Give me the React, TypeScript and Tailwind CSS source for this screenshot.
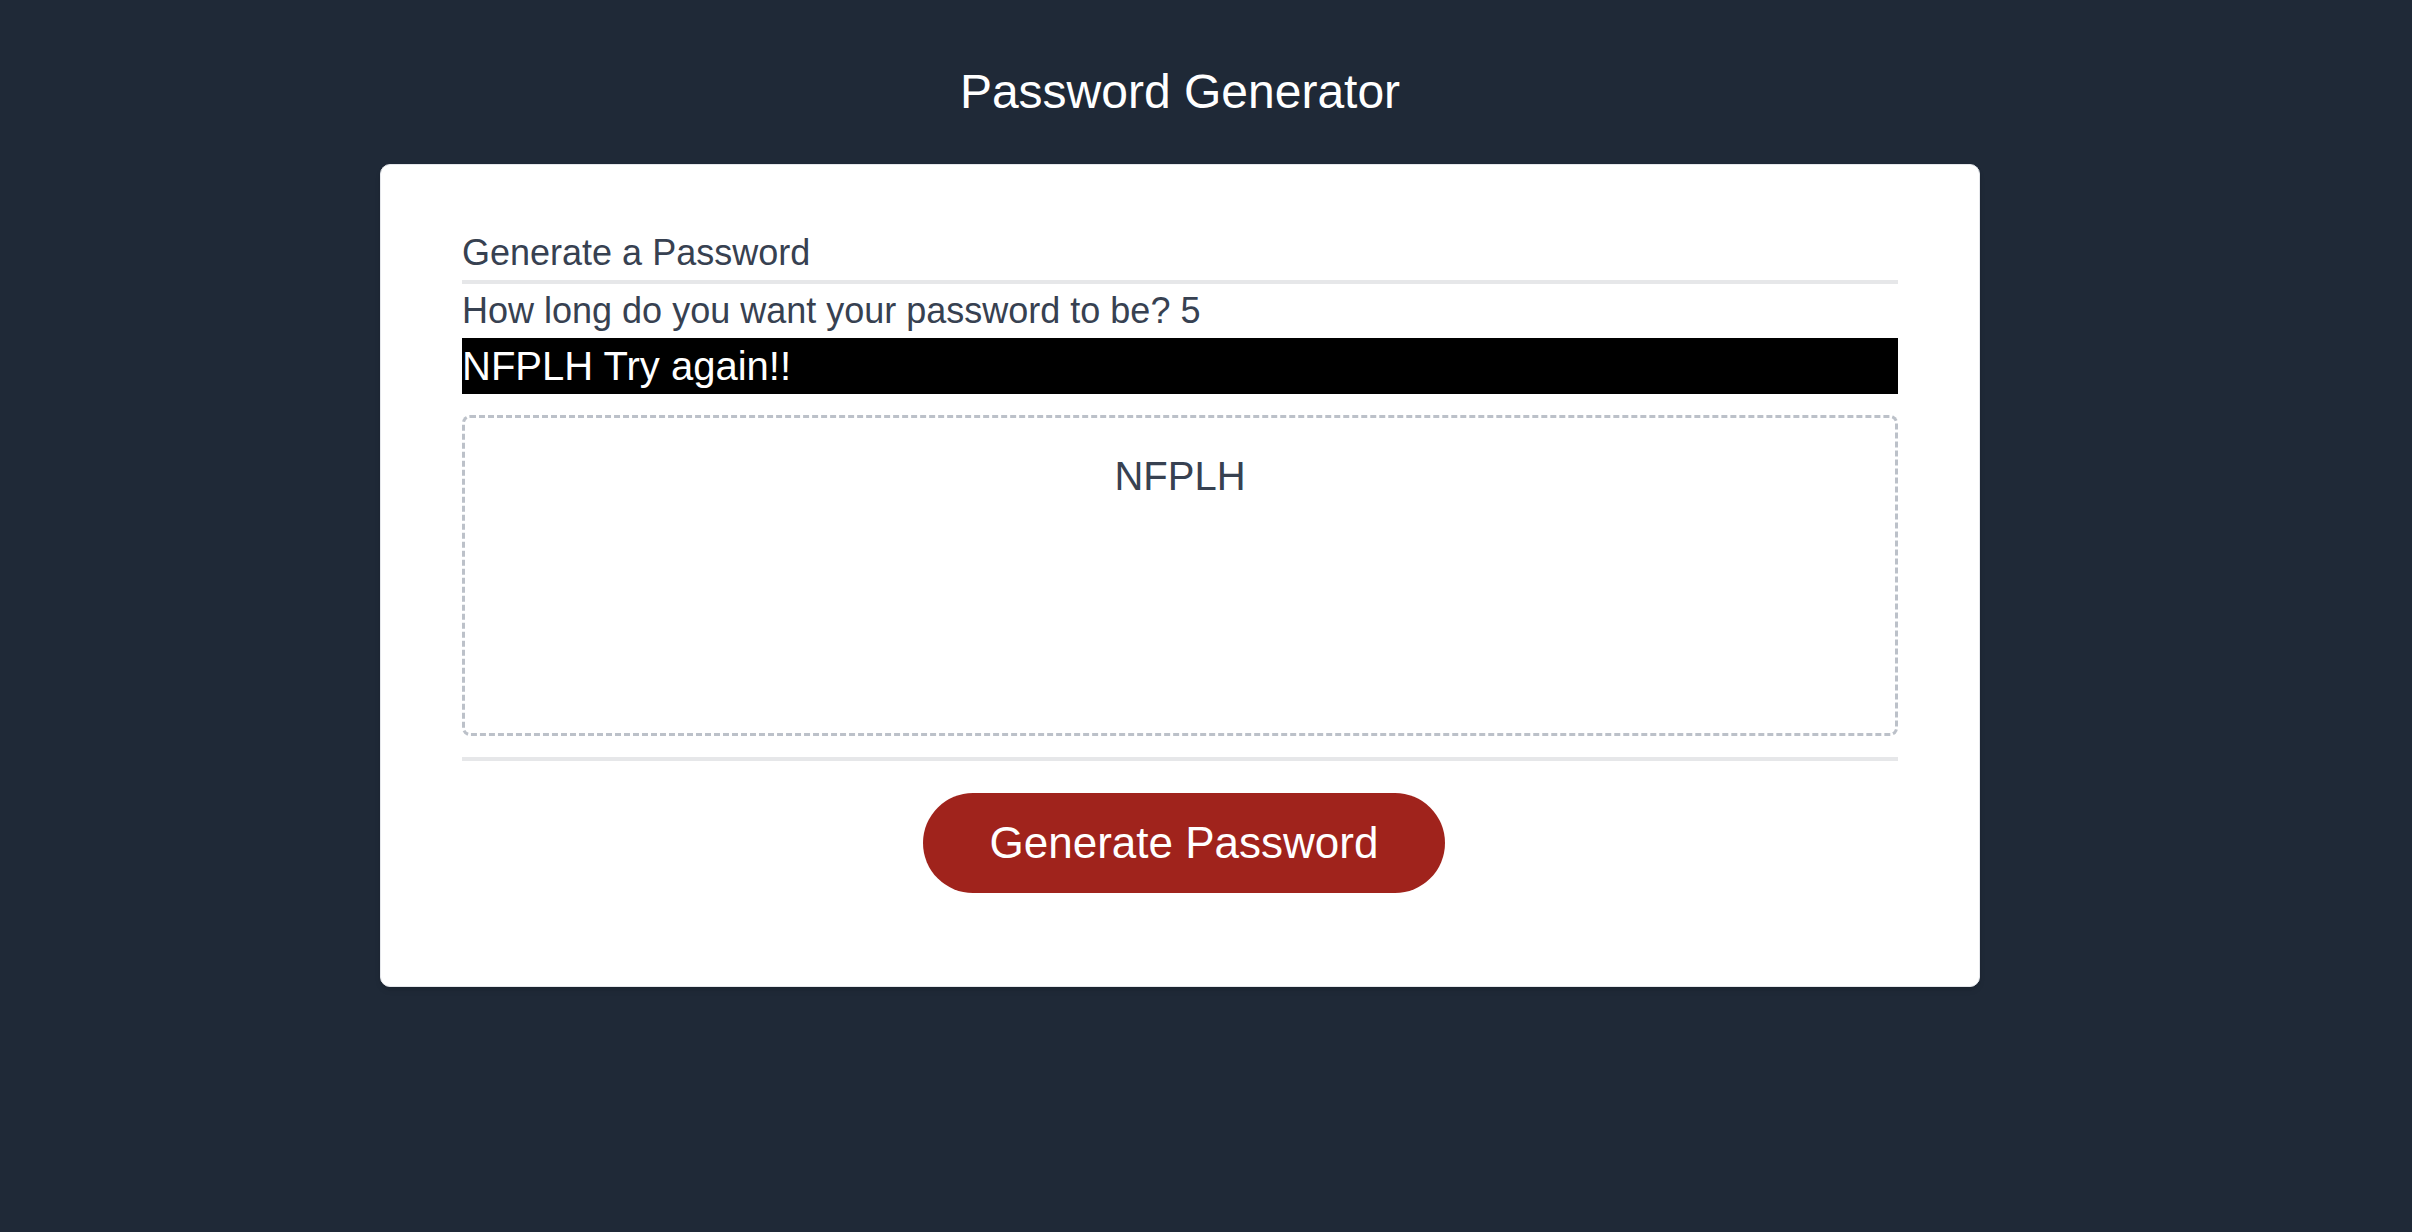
const App = () => {
  return (
    <div
      className="min-h-[1232px] w-full bg-[#1f2937] pr-[52px] pt-[56px]"
      style={{ fontFamily: '"Liberation Sans", Arial, Helvetica, sans-serif' }}
    >
      <h1 className="text-center text-[48px] leading-[72px] font-normal text-white">Password Generator</h1>

      <div className="mx-auto mt-[36px] w-[1600px] rounded-[10px] border border-[#e5e7eb] bg-white px-[81px] pt-[61px] pb-[93px] shadow-md">
        <h2 className="border-b-4 border-[#e6e7e9] text-[36px] leading-[54px] text-[#374151]">Generate a Password</h2>
        <p className="text-[36px] leading-[54px] text-[#374151]">How long do you want your password to be? 5</p>
        <p className="bg-black text-[40px] leading-[56px] text-white">NFPLH Try again!!</p>

        <div className="mt-[21px] h-[321px] rounded-[8px] border-[3px] border-dashed border-[#bcc1c9] pt-[30px] text-center text-[40px] leading-[56px] text-[#374151]">
          NFPLH
        </div>

        <div className="mt-[21px] h-[4px] bg-[#e6e7e9]" />

        <div className="mt-[32px] flex justify-center pl-[8px]">
          <button className="h-[100px] rounded-full bg-[#a0231c] px-[67px] text-[44px] leading-[56px] text-white">
            Generate Password
          </button>
        </div>
      </div>
    </div>
  );
};

export default App;
